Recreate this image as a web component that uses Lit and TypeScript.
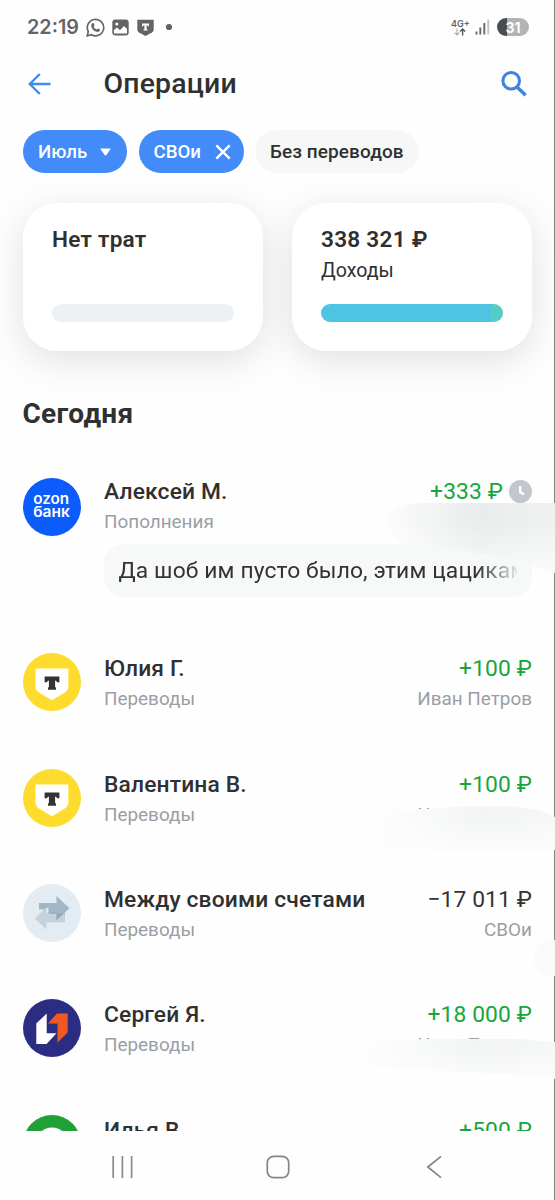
import { LitElement, html, css, svg, nothing } from "lit";
import { customElement, property } from "lit/decorators.js";

type Kind = "ozon" | "tbank" | "self" | "psb" | "sber";

interface Operation {
  kind: Kind;
  name: string;
  category: string;
  amount: string;
  account?: string;
  income: boolean;
  pending?: boolean;
  message?: string;
}

const OPERATIONS: Operation[] = [
  { kind: "ozon", name: "Алексей М.", category: "Пополнения", amount: "+333", income: true, pending: true, message: "Да шоб им пусто было, этим цацикам" },
  { kind: "tbank", name: "Юлия Г.", category: "Переводы", amount: "+100", account: "Иван Петров", income: true },
  { kind: "tbank", name: "Валентина В.", category: "Переводы", amount: "+100", account: "Иван Петров", income: true },
  { kind: "self", name: "Между своими счетами", category: "Переводы", amount: "−17 011", account: "СВОи", income: false },
  { kind: "psb", name: "Сергей Я.", category: "Переводы", amount: "+18 000", account: "Иван Петров", income: true },
  { kind: "sber", name: "Илья В.", category: "Переводы", amount: "+500", account: "Иван Петров", income: true },
];

@customElement("bank-avatar")
export class BankAvatar extends LitElement {
  @property() kind: Kind = "tbank";

  static styles = css`
    :host { display: block; width: 58px; height: 58px; flex: none; }
    svg { display: block; }
    .brand { font: 600 15px Inter, sans-serif; fill: #fff; }
  `;

  private art() {
    switch (this.kind) {
      case "ozon":
        return svg`<circle cx="29" cy="29" r="29" fill="#0b5cfa"/>
          <text class="brand" x="10.2" y="26.3" textLength="36" lengthAdjust="spacingAndGlyphs">ozon</text>
          <text class="brand" x="10.2" y="38.8" textLength="36.5" lengthAdjust="spacingAndGlyphs">банк</text>`;
      case "self":
        return svg`<circle cx="29" cy="29" r="29" fill="#e4ecf3"/>
          <path d="M12 34.5L23.5 23V28.5H42V38.5H23.5V45.5Z" fill="#c3d2dc"/>
          <path d="M16 19H33.5V12L46.5 24.3L33.5 36V29.5H25.5V23L20.5 25.5H16Z" fill="#a0b7c5"/>
          <path d="M25.5 28.5H33.5V36L39 31L42 28.5V29.5H25.5Z" fill="#8faabb"/>`;
      case "psb":
        return svg`<circle cx="29" cy="29" r="29" fill="#2b2d83"/>
          <path d="M13.3 45V24.5L23.7 14.5V34.3H33.5L23.5 45Z" fill="#fff"/>
          <path d="M25 24.5L34 14.5H44.7V33.5L34.5 43.5V24.5Z" fill="#f05a22"/>`;
      case "sber":
        return svg`<circle cx="29" cy="29" r="29" fill="#21a038"/><circle cx="29" cy="29" r="16.5" fill="#fefefe"/>`;
      default:
        return svg`<circle cx="29" cy="29" r="29" fill="#fddc2d"/>
          <path d="M12.5 15.5H45.3V33.5Q45.3 37.5 41.5 39.8L29 47.3L16.3 39.8Q12.5 37.5 12.5 33.5Z" fill="#fff"/>
          <path d="M21.6 23.5H36.4V29.2H34Q33.8 27.6 32.1 27.6V33.2Q32.1 34.6 33 34.8V36.8H25V34.8Q25.9 34.6 25.9 33.2V27.6Q24.2 27.6 24 29.2H21.6Z" fill="#333"/>`;
    }
  }

  render() {
    return html`<svg width="58" height="58" viewBox="0 0 58 58">${this.art()}</svg>`;
  }
}

@customElement("operation-row")
export class OperationRow extends LitElement {
  @property({ attribute: false }) op!: Operation;

  static styles = css`
    :host { display: block; }
    .row { display: flex; height: 115.3px; }
    .row.tall { height: 175.4px; }
    .body { flex: 1; min-width: 0; margin-left: 23px; padding-top: 1px; }
    .tall .body { padding-top: 0; }
    .line { display: flex; justify-content: space-between; white-space: nowrap; }
    .main { height: 30px; line-height: 29px; font-size: 22.8px; color: #303030; }
    .tall .main { line-height: 27px; height: 29px; }
    .name { font-weight: 500; letter-spacing: 0.15px; }
    .amount { display: flex; align-items: center; height: 29px; color: #333; letter-spacing: 0.12px; }
    .tall .amount { height: 27px; }
    .amount.income { color: #17a53c; }
    .clock { margin-left: 6px; }
    .sub { height: 29px; line-height: 29px; font-size: 18.9px; color: #9a9ea5; }
    .bubble { box-sizing: border-box; margin-top: 8px; height: 53px; border-radius: 20px; background: #f7f9f9; padding: 0 15px 0 14.5px; overflow: hidden; }
    .text { font-size: 22.8px; letter-spacing: 0.13px; line-height: 54px; color: #333; white-space: nowrap; overflow: hidden; -webkit-mask-image: linear-gradient(90deg, #000 90%, transparent 101%); mask-image: linear-gradient(90deg, #000 90%, transparent 101%); }
  `;

  render() {
    const o = this.op;
    return html`<div class="row ${o.message ? "tall" : ""}">
      <bank-avatar .kind=${o.kind}></bank-avatar>
      <div class="body">
        <div class="line main">
          <span class="name">${o.name}</span>
          <span class="amount ${o.income ? "income" : ""}">${o.amount} ₽${o.pending
            ? html`<svg class="clock" width="23" height="23" viewBox="0 0 23 23"><circle cx="11.5" cy="11.5" r="11.5" fill="#c3c6cc"/><path d="M11.2 6V12.2L15 14.3" fill="none" stroke="#fff" stroke-width="2.4"/></svg>`
            : nothing}</span>
        </div>
        <div class="line sub"><span>${o.category}</span><span>${o.account ?? ""}</span></div>
        ${o.message ? html`<div class="bubble"><div class="text">${o.message}</div></div>` : nothing}
      </div>
    </div>`;
  }
}

@customElement("app-root")
export class AppRoot extends LitElement {
  static styles = css`
    :host { display: block; width: 555px; height: 1200px; position: relative; overflow: hidden; background: #fefefe; font-family: Roboto, "Noto Sans", sans-serif; color: #303030; }
    svg { display: block; flex: none; }
    .screen { display: flex; flex-direction: column; height: 1200px; box-sizing: border-box; border-right: 1px solid #858585; }
    .status { display: flex; align-items: center; height: 54px; padding: 0 25px 0 27px; flex: none; box-sizing: border-box; color: #646464; }
    .time { font: 600 19.8px Inter, sans-serif; width: 59px; letter-spacing: 0; }
    .picture { margin-left: 7px; }
    .shield { margin-left: 7.5px; }
    .dot { margin-left: 11px; }
    .spacer { flex: 1; }
    .battery { display: flex; align-items: center; justify-content: center; width: 32px; height: 18px; border-radius: 9px; background: linear-gradient(90deg, #4b4b4b 10px, #b3b3b3 10.5px); color: #fff; font: 700 14px Inter, sans-serif; }
    .net { font: 600 9px/9px Inter, sans-serif; text-align: center; width: 18px; margin-right: 6px; }
    .net svg { margin: 0 auto; }
    .signal { margin-right: 7px; }
    .header { display: flex; align-items: center; height: 60px; padding: 0 27px 0 28px; flex: none; }
    .title { flex: 1; margin: -2px 0 0 52.5px; font-size: 28.4px; font-weight: 500; letter-spacing: 0.2px; }
    .chips { display: flex; gap: 11.5px; margin: 16px 0 0 23px; flex: none; }
    .chip { display: flex; align-items: center; height: 43px; box-sizing: border-box; border-radius: 22px; padding: 0 15px; background: #428bf9; color: #fff; font-size: 18.7px; font-weight: 500; white-space: nowrap; }
    .month { width: 104px; justify-content: space-between; padding-right: 16px; }
    .account { width: 105px; justify-content: space-between; padding-right: 13px; }
    .plain { background: #f6f8f8; color: #303030; width: 164px; font-size: 19px; letter-spacing: 0.08px; }
    .cards { display: flex; gap: 29px; margin: 30px 22px 0 23px; flex: none; }
    .card { flex: 1; height: 148px; box-sizing: border-box; border-radius: 34px; background: #fff; box-shadow: 0 9px 38px rgba(0, 0, 0, 0.12); padding: 22px 29px 0; display: flex; flex-direction: column; }
    .sum { font-size: 22.6px; font-weight: 600; line-height: 29px; height: 31px; letter-spacing: 0.25px; }
    .label { font-size: 19.6px; line-height: 29px; height: 48px; }
    .bar { height: 18px; border-radius: 9px; background: #edf1f4; overflow: hidden; display: flex; }
    .part { background: #4ec4e2; }
    .rest { flex: 1; background: #54cdc4; }
    .day { margin: 43px 0 0 22.5px; font-size: 28px; font-weight: 700; line-height: 40px; letter-spacing: 0.3px; flex: none; }
    .list { flex: 1; min-height: 0; overflow: hidden; padding: 44px 22px 0 23px; }
    .nav { height: 69px; flex: none; display: flex; align-items: center; box-sizing: border-box; padding: 3px 0 0 111px; }
    .home { margin-left: 132px; }
    .back { margin-left: 136px; }
    .smear { position: absolute; left: 355px; top: 495px; pointer-events: none; }
  `;

  render() {
    return html`
      <div class="screen">
        <div class="status">
          <span class="time">22:19</span>
          <svg width="19" height="19" viewBox="0 0 19 19"><path d="M1.2 17.8L2.3 13.5A8.2 8.2 0 1 1 5.4 16.7Z" fill="none" stroke="#646464" stroke-width="1.6"/><path d="M6.1 5.2L7.5 5L8.6 7.5L7.6 8.8Q8.5 10.8 10.7 11.6L11.7 10.4L14.1 11.6Q14 13.8 11.8 14Q7.3 13.5 5.4 9Q4.7 6.6 6.1 5.2Z" fill="#646464"/></svg>
          <svg class="picture" width="17" height="17" viewBox="0 0 17 17"><rect x="0.3" y="0.6" width="16.4" height="16" rx="3" fill="#646464"/><circle cx="4.8" cy="5" r="1.5" fill="#fff"/><path d="M2 14.5V11L5 8.6L8 11.3L12 7L15 10V14.5Z" fill="#fff"/></svg>
          <svg class="shield" width="17" height="17" viewBox="0 0 17 17"><path d="M0.3 0.8H16.7V10.5Q16.7 12.5 15 13.5L8.5 17L2 13.5Q0.3 12.5 0.3 10.5Z" fill="#646464"/><path d="M5 4.5H12V7.2H10.7L10.3 6.3H9.6V10.2L10.5 10.5V11.6H6.5V10.5L7.4 10.2V6.3H6.7L6.3 7.2H5Z" fill="#fff"/></svg>
          <svg class="dot" width="8" height="8" viewBox="0 0 8 8"><circle cx="4" cy="4" r="3.1" fill="#646464"/></svg>
          <span class="spacer"></span>
          <div class="net">4G+<svg width="12" height="8" viewBox="0 0 12 8"><path d="M3 0.5V7M0.6 4.7L3 7L5.4 4.7" fill="none" stroke="#aaa" stroke-width="1.1"/><path d="M8.6 7.5V1M6 3.4L8.6 1L11.2 3.4" fill="none" stroke="#555" stroke-width="1.4"/></svg></div>
          <svg class="signal" width="15" height="16" viewBox="0 0 15 16"><path d="M1.5 12.5V15.5M5.3 8.5V15.5M9.3 4V15.5" stroke="#686868" stroke-width="1.9"/><path d="M13.2 0.5V15.5" stroke="#c4c4c4" stroke-width="1.9"/></svg>
          <div class="battery">31</div>
        </div>
        <div class="header">
          <svg width="23" height="22" viewBox="0 0 23 22"><path d="M22.5 11H1.7M11.8 1L1.8 11L11.8 21" fill="none" stroke="#428bf0" stroke-width="2.4"/></svg>
          <h1 class="title">Операции</h1>
          <svg width="26" height="26" viewBox="0 0 26 26"><circle cx="10.2" cy="9.8" r="8.3" fill="none" stroke="#4283e2" stroke-width="3"/><path d="M15.8 15.7L24.6 24.3" stroke="#4283e2" stroke-width="3.4"/></svg>
        </div>
        <div class="chips">
          <div class="chip month"><span>Июль</span><svg width="11" height="8" viewBox="0 0 12 9"><path d="M1 .5H11Q12 .5 11.4 1.6L7 8Q6 9 5 8L.6 1.6Q0 .5 1 .5Z" fill="#fff"/></svg></div>
          <div class="chip account"><span>СВОи</span><svg width="16" height="16" viewBox="0 0 16 16"><path d="M1.3 1.3L14.7 14.7M14.7 1.3L1.3 14.7" stroke="#fff" stroke-width="2.4"/></svg></div>
          <div class="chip plain">Без переводов</div>
        </div>
        <div class="cards">
          <div class="card"><div class="sum">Нет трат</div><div class="label"></div><div class="bar"></div></div>
          <div class="card"><div class="sum">338 321 ₽</div><div class="label">Доходы</div><div class="bar"><div class="part" style="width:93.5%"></div><div class="rest"></div></div></div>
        </div>
        <div class="day">Сегодня</div>
        <div class="list">${OPERATIONS.map((op) => html`<operation-row .op=${op}></operation-row>`)}</div>
        <div class="nav">
          <svg width="23" height="22" viewBox="0 0 23 22"><path d="M2.2 0V22M11.4 0V22M20.6 0V22" stroke="#8a8a8a" stroke-width="1.7"/></svg>
          <svg class="home" width="24" height="24" viewBox="0 0 24 24"><rect x="1.3" y="1.3" width="21.4" height="21.4" rx="6.5" fill="none" stroke="#858585" stroke-width="1.7"/></svg>
          <svg class="back" width="16" height="24" viewBox="0 0 16 24"><path d="M15 1.3L1.8 12L15 22.7" fill="none" stroke="#858585" stroke-width="1.7"/></svg>
        </div>
      </div>
      <svg class="smear" width="200" height="600" viewBox="355 495 200 600">
        <defs>
          <linearGradient id="a" x1="0" y1="0" x2="1" y2="0"><stop offset="0" stop-color="#fcfcfc"/><stop offset=".25" stop-color="#f3f5f5"/><stop offset=".55" stop-color="#e9ecec"/><stop offset="1" stop-color="#f0f2f2"/></linearGradient>
          <linearGradient id="f" x1="0" y1="0" x2="0" y2="1"><stop offset=".3" stop-color="#fdfdfd" stop-opacity="0"/><stop offset="1" stop-color="#fdfdfd" stop-opacity=".8"/></linearGradient>
          <linearGradient id="b" x1="0" y1="0" x2="1" y2="0"><stop offset="0" stop-color="#fefefe"/><stop offset=".6" stop-color="#f3f5f5"/><stop offset="1" stop-color="#f6f7f7"/></linearGradient>
        </defs>
        <path d="M420 503H555V573Q530 564 500 557Q460 549 407 546Q396 542 394 534Q384 530 388 522Q386 510 400 506Q408 503 420 503Z" fill="url(#a)"/>
        <path d="M420 503H555V573Q530 564 500 557Q460 549 407 546Q396 542 394 534Q384 530 388 522Q386 510 400 506Q408 503 420 503Z" fill="url(#f)"/>
        <path d="M375 812Q410 809 435 808.8Q455 806 475 806Q530 804 555 817V850H375Z" fill="url(#b)"/>
        <path d="M375 812Q410 809 435 808.8Q455 806 475 806Q530 804 555 817V850H375Z" fill="url(#f)"/>
        <path d="M555 940H548A18.5 18.5 0 0 0 548 976H555Z" fill="#fafafa"/>
        <path d="M355 1044Q390 1040 430 1039H520L555 1042V1079Q530 1074 500 1074L355 1066Z" fill="url(#b)"/>
        <path d="M355 1044Q390 1040 430 1039H520L555 1042V1079Q530 1074 500 1074L355 1066Z" fill="url(#f)"/>
      </svg>`;
  }
}
